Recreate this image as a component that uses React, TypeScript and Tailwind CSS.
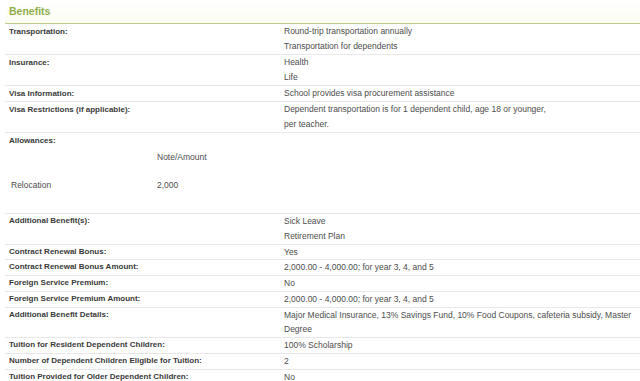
import React from "react";

// ── Data ────────────────────────────────────────────────────────────────────

type Row = { label: string; values: string[] };

const TOP_ROWS: Row[] = [
  { label: "Transportation:", values: ["Round-trip transportation annually", "Transportation for dependents"] },
  { label: "Insurance:", values: ["Health", "Life"] },
  { label: "Visa Information:", values: ["School provides visa procurement assistance"] },
  {
    label: "Visa Restrictions (if applicable):",
    values: ["Dependent transportation is for 1 dependent child, age 18 or younger,", "per teacher."],
  },
];

const BOTTOM_ROWS: Row[] = [
  { label: "Additional Benefit(s):", values: ["Sick Leave", "Retirement Plan"] },
  { label: "Contract Renewal Bonus:", values: ["Yes"] },
  { label: "Contract Renewal Bonus Amount:", values: ["2,000.00 - 4,000.00; for year 3, 4, and 5"] },
  { label: "Foreign Service Premium:", values: ["No"] },
  { label: "Foreign Service Premium Amount:", values: ["2,000.00 - 4,000.00; for year 3, 4, and 5"] },
  {
    label: "Additional Benefit Details:",
    values: ["Major Medical Insurance, 13% Savings Fund, 10% Food Coupons, cafeteria subsidy, Master", "Degree"],
  },
  { label: "Tuition for Resident Dependent Children:", values: ["100% Scholarship"] },
  { label: "Number of Dependent Children Eligible for Tuition:", values: ["2"] },
  { label: "Tuition Provided for Older Dependent Children:", values: ["No"] },
];

// ── Pieces ──────────────────────────────────────────────────────────────────

function BenefitRow({ label, values, tight = false }: Row & { tight?: boolean }) {
  const lh = tight ? "leading-[14.75px]" : "leading-[15px]";
  return (
    <div className="flex border-b border-[#e8e8e8]">
      <div className={`w-[279px] shrink-0 pl-[4px] text-[8px] font-bold text-[#3a3a3a] ${lh}`}>{label}</div>
      <div className="flex flex-col">
        {values.map((v) => (
          <span key={v} className={`text-[8.5px] text-[#4d4d4d] whitespace-nowrap ${lh}`}>
            {v}
          </span>
        ))}
      </div>
    </div>
  );
}

function Allowances() {
  return (
    <div className="border-b border-[#e8e8e8]">
      <div className="pl-[4px] text-[8px] font-bold leading-[15px] text-[#3a3a3a]">Allowances:</div>
      <div className="mt-[2px] flex flex-col gap-[13px] pb-[20px] pl-[6px] text-[8.5px] leading-[15px] text-[#4d4d4d]">
        <div className="flex">
          <span className="w-[146px]" />
          <span>Note/Amount</span>
        </div>
        <div className="flex">
          <span className="w-[146px]">Relocation</span>
          <span>2,000</span>
        </div>
      </div>
    </div>
  );
}

// ── Page ────────────────────────────────────────────────────────────────────

export default function App() {
  return (
    <div
      className="h-[381px] w-[640px] overflow-hidden bg-white pl-[5px]"
      style={{ fontFamily: '"Liberation Sans", Arial, sans-serif' }}
    >
      <div className="h-[24px] border-b border-[#bccb8c] bg-gradient-to-b from-white to-[#fbfcf1] pl-[4px] pt-[5px]">
        <h2 className="text-[10.5px] font-bold leading-[13px] text-[#8fae4a]">Benefits</h2>
      </div>
      {TOP_ROWS.map((r) => (
        <BenefitRow key={r.label} {...r} />
      ))}
      <Allowances />
      {BOTTOM_ROWS.map((r) => (
        <BenefitRow key={r.label} {...r} tight />
      ))}
    </div>
  );
}
